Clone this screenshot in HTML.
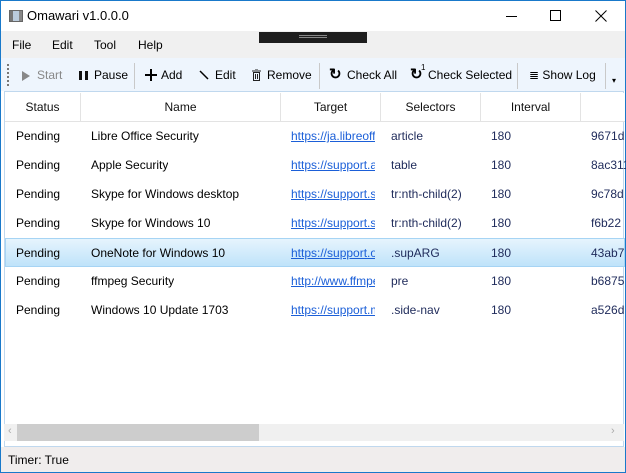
<!DOCTYPE html><html><head><style>
*{box-sizing:border-box;margin:0;padding:0}
body{width:626px;height:473px;overflow:hidden;font-family:"Liberation Sans",sans-serif;font-size:12px;color:#000;background:#fff;position:relative}
.win{position:absolute;left:0;top:0;width:626px;height:473px;border:1px solid #1979ca}
.abs{position:absolute;white-space:nowrap}
.title{left:0;top:0;width:624px;height:30px;background:#fff}
.menu{left:0;top:30px;width:624px;height:27px;background:#f0f0f0}
.tb{left:0;top:57px;width:624px;height:33px;background:#eef5fd}
.sep{position:absolute;top:5px;width:1px;height:26px;background:#c9c9c9}
.hdr{left:4px;top:92px;width:620px;height:29px;background:#fff;border-bottom:1px solid #e3e3e3}
.hd{position:absolute;top:0;height:28px;line-height:28px;text-align:center;border-right:1px solid #e3e3e3;color:#111}
.row{position:absolute;left:4px;width:620px;height:29px;line-height:29px}
.c{position:absolute;top:0;overflow:hidden;white-space:nowrap}
.n{color:#1e2a5a}
a{color:#1b5fd8;text-decoration:underline}
</style></head><body><div class="win">
<div class="abs title">
<div class="abs" style="left:8px;top:9px;width:14px;height:12px;background:linear-gradient(90deg,#777 0 3px,#bcd 3px 9px,#888 9px);border:1px solid #666"></div>
<div class="abs" style="left:26px;top:7px;font-size:13px">Omawari v1.0.0.0</div>
<div class="abs" style="left:505px;top:15px;width:11px;height:1px;background:#000"></div>
<div class="abs" style="left:549px;top:9px;width:11px;height:11px;border:1px solid #000"></div>
<svg class="abs" style="left:594px;top:9px" width="12" height="12"><path d="M0.5 0.5L11.5 11.5M11.5 0.5L0.5 11.5" stroke="#000" stroke-width="1"/></svg>
</div>
<div class="abs menu">
<span class="abs" style="left:11px;top:7px">File</span>
<span class="abs" style="left:51px;top:7px">Edit</span>
<span class="abs" style="left:93px;top:7px">Tool</span>
<span class="abs" style="left:137px;top:7px">Help</span>
<div class="abs" style="left:258px;top:1px;width:108px;height:11px;background:#1e1e1e"><div class="abs" style="left:40px;top:3px;width:28px;height:3px;border-top:1px solid #888;border-bottom:1px solid #888"></div></div>
</div>
<div class="abs tb">
<div class="abs" style="left:6px;top:6px;width:2px;height:22px;background:repeating-linear-gradient(#777 0 2px,transparent 2px 4px)"></div>
<svg class="abs" style="left:20px;top:13px" width="9" height="10"><path d="M1 0L9 5L1 10Z" fill="#888"/></svg>
<span class="abs" style="left:36px;top:10px;color:#888">Start</span>
<div class="abs" style="left:78px;top:13px;width:3px;height:9px;background:#111"></div>
<div class="abs" style="left:84px;top:13px;width:3px;height:9px;background:#111"></div>
<span class="abs" style="left:93px;top:10px">Pause</span>
<div class="sep" style="left:133px"></div>
<svg class="abs" style="left:144px;top:11px" width="12" height="12"><path d="M6 0V12M0 6H12" stroke="#000" stroke-width="2"/></svg>
<span class="abs" style="left:160px;top:10px">Add</span>
<svg class="abs" style="left:198px;top:12px" width="10" height="10"><path d="M1 1L9 9" stroke="#000" stroke-width="1.5"/></svg>
<span class="abs" style="left:214px;top:10px">Edit</span>
<svg class="abs" style="left:251px;top:11px" width="9" height="12"><path d="M0 2H9M3 0H6M1.5 3.5H7.5V11.5H1.5Z M3.5 5V10M5.5 5V10" stroke="#222" stroke-width="1" fill="none"/></svg>
<span class="abs" style="left:266px;top:10px">Remove</span>
<div class="sep" style="left:318px"></div>
<span class="abs" style="left:328px;top:7px;font-size:15px;font-weight:bold">↻</span><span class="abs" style="left:346px;top:10px">Check All</span>
<span class="abs" style="left:409px;top:7px;font-size:15px;font-weight:bold">↻</span><span class="abs" style="left:420px;top:5px;font-size:8px">1</span><span class="abs" style="left:427px;top:10px">Check Selected</span>
<div class="sep" style="left:516px"></div>
<span class="abs" style="left:528px;top:10px">≣ Show Log</span>
<div class="sep" style="left:604px"></div>
<span class="abs" style="left:611px;top:18px;font-size:8px">▾</span>
</div>
<div class="abs" style="left:3px;top:90px;width:620px;height:356px;border:1px solid #c0d8ee;background:#fff"></div>
<div class="abs hdr">
<div class="hd" style="left:0;width:76px">Status</div>
<div class="hd" style="left:76px;width:200px">Name</div>
<div class="hd" style="left:276px;width:100px">Target</div>
<div class="hd" style="left:376px;width:100px">Selectors</div>
<div class="hd" style="left:476px;width:100px">Interval</div>
</div>
<div class="row" style="top:121px"><span class="c" style="left:11px">Pending</span><span class="c" style="left:86px">Libre Office Security</span><span class="c" style="left:286px;width:84px"><a>https://ja.libreoffice</a></span><span class="c n" style="left:386px">article</span><span class="c n" style="left:486px">180</span><span class="c n" style="left:586px">9671d</span></div>
<div class="row" style="top:150px"><span class="c" style="left:11px">Pending</span><span class="c" style="left:86px">Apple Security</span><span class="c" style="left:286px;width:84px"><a>https://support.apple</a></span><span class="c n" style="left:386px">table</span><span class="c n" style="left:486px">180</span><span class="c n" style="left:586px">8ac311</span></div>
<div class="row" style="top:179px"><span class="c" style="left:11px">Pending</span><span class="c" style="left:86px">Skype for Windows desktop</span><span class="c" style="left:286px;width:84px"><a>https://support.skype</a></span><span class="c n" style="left:386px">tr:nth-child(2)</span><span class="c n" style="left:486px">180</span><span class="c n" style="left:586px">9c78d</span></div>
<div class="row" style="top:208px"><span class="c" style="left:11px">Pending</span><span class="c" style="left:86px">Skype for Windows 10</span><span class="c" style="left:286px;width:84px"><a>https://support.skype</a></span><span class="c n" style="left:386px">tr:nth-child(2)</span><span class="c n" style="left:486px">180</span><span class="c n" style="left:586px">f6b22</span></div>
<div class="row" style="top:237px;background:linear-gradient(#e6f4fd,#bfe3fa);border:1px solid #a6d4f4"><span class="c" style="left:10px">Pending</span><span class="c" style="left:85px">OneNote for Windows 10</span><span class="c" style="left:285px;width:84px"><a>https://support.office</a></span><span class="c n" style="left:385px">.supARG</span><span class="c n" style="left:485px">180</span><span class="c n" style="left:585px">43ab7</span></div>
<div class="row" style="top:266px"><span class="c" style="left:11px">Pending</span><span class="c" style="left:86px">ffmpeg Security</span><span class="c" style="left:286px;width:84px"><a>http://www.ffmpeg.org</a></span><span class="c n" style="left:386px">pre</span><span class="c n" style="left:486px">180</span><span class="c n" style="left:586px">b6875</span></div>
<div class="row" style="top:295px"><span class="c" style="left:11px">Pending</span><span class="c" style="left:86px">Windows 10 Update 1703</span><span class="c" style="left:286px;width:84px"><a>https://support.micro</a></span><span class="c n" style="left:386px">.side-nav</span><span class="c n" style="left:486px">180</span><span class="c n" style="left:586px">a526d</span></div>
<div class="abs" style="left:3px;top:423px;width:620px;height:17px;background:#f0f0f0"></div>
<div class="abs" style="left:16px;top:423px;width:242px;height:17px;background:#cdcdcd"></div>
<span class="abs" style="left:7px;top:424px;color:#aaa;font-size:11px">‹</span>
<span class="abs" style="left:610px;top:424px;color:#aaa;font-size:11px">›</span>
<div class="abs" style="left:0;top:446px;width:624px;height:25px;background:#f0eded"><span class="abs" style="left:7px;top:6px">Timer: True</span></div>
</div></body></html>
